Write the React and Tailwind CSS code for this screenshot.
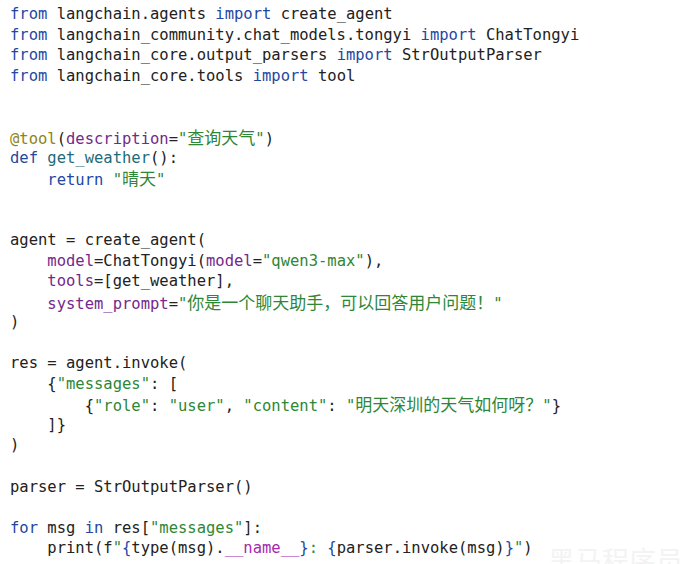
import React from "react";

const K = ({ children }) => <span className="text-[#1f47a3]">{children}</span>;
const S = ({ children }) => <span className="text-[#2e8736]">{children}</span>;
const P = ({ children }) => <span className="text-[#74298a]">{children}</span>;
const D = ({ children }) => <span className="text-[#8c8420]">{children}</span>;
const F = ({ children }) => <span className="text-[#1d6b79]">{children}</span>;
const U = ({ children }) => <span className="text-[#a52aad]">{children}</span>;
const B = ({ children }) => <span className="text-[#1f47a3]">{children}</span>;
// CJK text is drawn a touch larger than the latin glyphs, as in the editor
const C = ({ children }) => (
  <span className="text-[17px] font-['Noto_Sans_CJK_SC',sans-serif]">{children}</span>
);

const Line = ({ children }) => (
  <div className="h-[20.55px] leading-[20.55px] whitespace-pre">{children}</div>
);

export default function App() {
  return (
    <div className="relative w-[695px] h-[564px] overflow-hidden bg-white pl-[10px] pt-[4px] text-[15.5px] text-[#222] font-['DejaVu_Sans_Mono','Noto_Sans_CJK_SC',monospace]">
      <Line><K>from</K> langchain.agents <K>import</K> create_agent</Line>
      <Line><K>from</K> langchain_community.chat_models.tongyi <K>import</K> ChatTongyi</Line>
      <Line><K>from</K> langchain_core.output_parsers <K>import</K> StrOutputParser</Line>
      <Line><K>from</K> langchain_core.tools <K>import</K> tool</Line>
      <Line> </Line>
      <Line> </Line>
      <Line><D>@tool</D>(<P>description</P>=<S>"<C>查询天气</C>"</S>)</Line>
      <Line><K>def</K> <F>get_weather</F>():</Line>
      <Line>    <K>return</K> <S>"<C>晴天</C>"</S></Line>
      <Line> </Line>
      <Line> </Line>
      <Line>agent = create_agent(</Line>
      <Line>    <P>model</P>=ChatTongyi(<P>model</P>=<S>"qwen3-max"</S>),</Line>
      <Line>    <P>tools</P>=[get_weather],</Line>
      <Line>    <P>system_prompt</P>=<S>"<C>你是一个聊天助手，可以回答用户问题！</C>"</S></Line>
      <Line>)</Line>
      <Line> </Line>
      <Line>res = agent.invoke(</Line>
      <Line>    {"{"}<S>"messages"</S>: [</Line>
      <Line>        {"{"}<S>"role"</S>: <S>"user"</S>, <S>"content"</S>: <S>"<C>明天深圳的天气如何呀？</C>"</S>{"}"}</Line>
      <Line>    ]{"}"}</Line>
      <Line>)</Line>
      <Line> </Line>
      <Line>parser = StrOutputParser()</Line>
      <Line> </Line>
      <Line><K>for</K> msg <K>in</K> res[<S>"messages"</S>]:</Line>
      <Line>    print(f<S>"</S><B>{"{"}</B>type(msg).<U>__name__</U><B>{"}"}</B><S>: </S><B>{"{"}</B>parser.invoke(msg)<B>{"}"}</B><S>"</S>)</Line>
      <div className="absolute right-[12px] bottom-[-9px] text-[27px] leading-none text-[#f3f3f3] font-['Noto_Sans_CJK_SC',sans-serif]">
        黑马程序员
      </div>
    </div>
  );
}
